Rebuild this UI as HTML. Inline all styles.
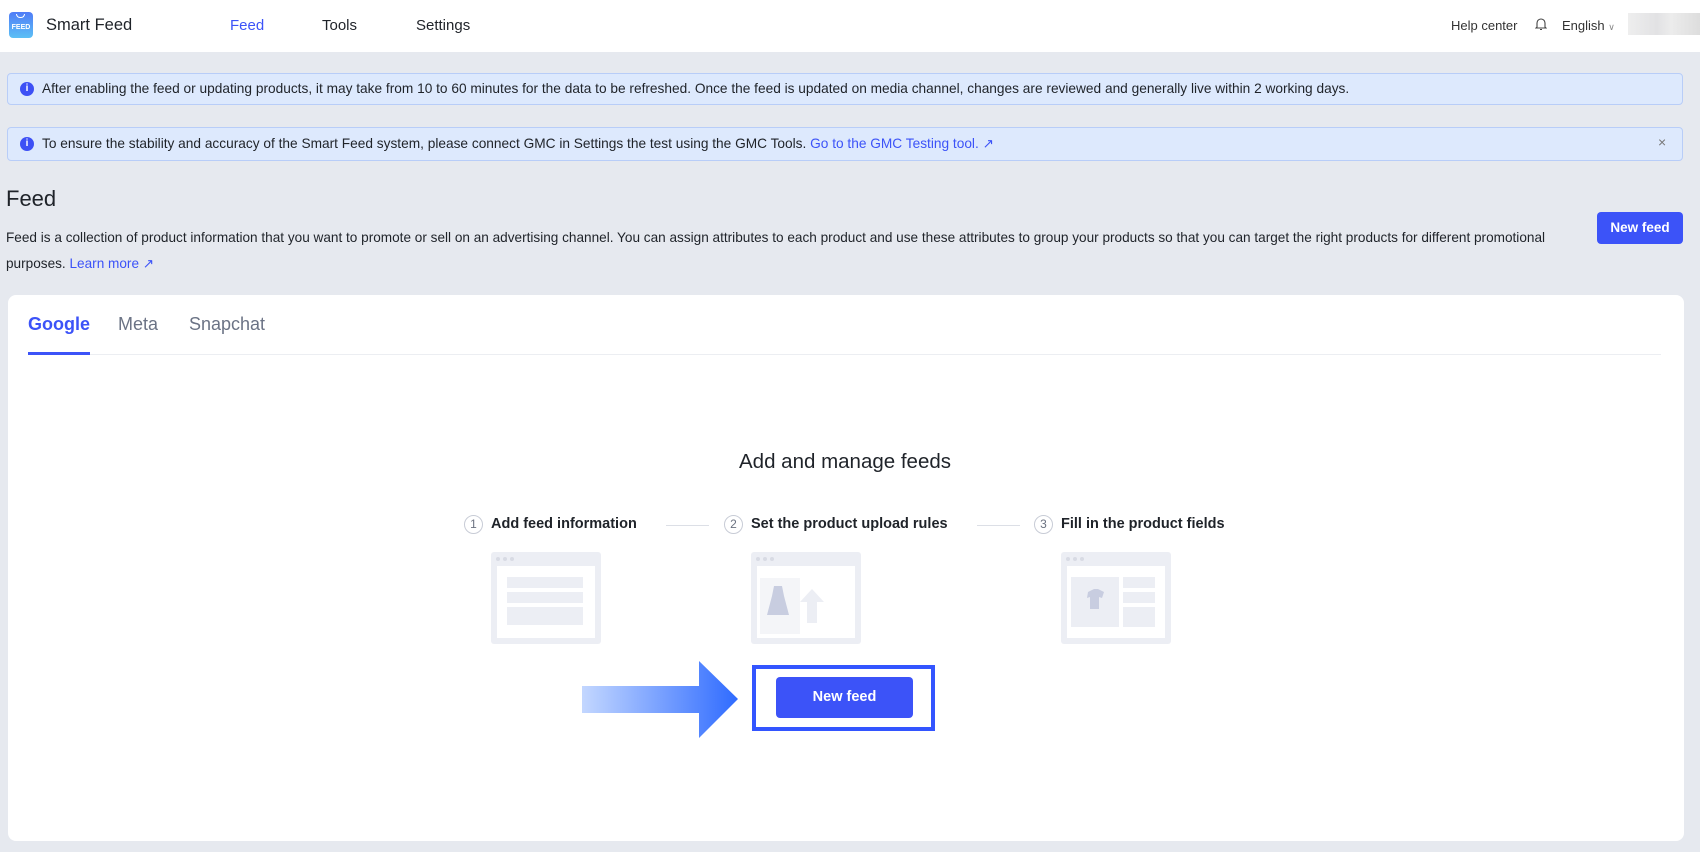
<!DOCTYPE html>
<html><head><meta charset="utf-8"><style>
*{box-sizing:border-box;margin:0;padding:0}
body{width:1700px;height:852px;background:#e6e9ef;font-family:"Liberation Sans",sans-serif;color:#1f2329;position:relative;overflow:hidden}
.abs{position:absolute;white-space:nowrap}
.hdr{position:absolute;left:0;top:0;width:1700px;height:52px;background:#fff}
.alert{position:absolute;left:7px;width:1676px;background:#dde9fd;border:1px solid #b8cdf8;border-radius:4px}
.info{position:absolute;width:14px;height:14px;border-radius:50%;background:#3d50f5;color:#fff;font-size:10px;font-weight:bold;text-align:center;line-height:14px}
.atext{font-size:13.7px;color:#1f2329;font-weight:500}
.btn{position:absolute;background:#3c53f8;color:#fff;font-weight:bold;font-size:14px;border-radius:4px;text-align:center}
.card{position:absolute;left:8px;top:295px;width:1676px;height:546px;background:#fff;border-radius:8px}
.circ{position:absolute;width:19px;height:19px;border:1px solid #c8ccd6;border-radius:50%;font-size:12px;color:#6b7280;text-align:center;line-height:17px}
.step{font-size:14.5px;font-weight:bold;color:#1f2329}
.ln{position:absolute;height:1px;background:#dcdfe6}
</style></head><body>
<div class="hdr"></div>
<div class="abs" style="left:9px;top:12px;width:24px;height:26px;border-radius:4px;background:linear-gradient(#4f7cf7,#5cc0f5)"></div>
<div class="abs" style="left:16px;top:14px;width:9px;height:4px;border:1.5px solid #fff;border-top:none;border-radius:0 0 5px 5px"></div>
<div class="abs" style="left:9px;top:24px;width:24px;font-size:7px;font-weight:bold;color:#fff;text-align:center">FEED</div>
<div class="abs" style="left:46px;top:16px;font-size:16.5px;color:#1f2329">Smart Feed</div>
<div class="abs" style="left:230px;top:17px;font-size:15px;color:#3c53f8;font-weight:500">Feed</div>
<div class="abs" style="left:322px;top:17px;font-size:15px;color:#1f2329">Tools</div>
<div class="abs" style="left:416px;top:17px;font-size:15px;color:#1f2329">Settings</div>
<div class="abs" style="left:1451px;top:18px;font-size:13px;color:#333">Help center</div>
<svg class="abs" style="left:1535px;top:17px" width="12" height="14" viewBox="0 0 12 14"><path d="M2 10V6a4 4 0 0 1 8 0v4l1 1H1z M5 12.5h2" fill="none" stroke="#444" stroke-width="1.1"/></svg>
<div class="abs" style="left:1562px;top:18px;font-size:13px;color:#333">English <span style="font-size:9px;color:#888">&#8744;</span></div>
<div class="abs" style="left:1628px;top:13px;width:72px;height:22px;background:linear-gradient(90deg,#eee,#e2e2e4 40%,#ececec 60%,#ddd)"></div>

<div class="alert" style="top:73px;height:32px"></div>
<div class="info" style="left:20px;top:82px">i</div>
<div class="abs atext" style="left:42px;top:81px">After enabling the feed or updating products, it may take from 10 to 60 minutes for the data to be refreshed. Once the feed is updated on media channel, changes are reviewed and generally live within 2 working days.</div>
<div class="alert" style="top:127px;height:34px"></div>
<div class="info" style="left:20px;top:137px">i</div>
<div class="abs atext" style="left:42px;top:136px">To ensure the stability and accuracy of the Smart Feed system, please connect GMC in Settings the test using the GMC Tools. <span style="color:#3c53f8">Go to the GMC Testing tool. &#8599;</span></div>
<div class="abs" style="left:1658px;top:134px;font-size:14px;color:#777">&times;</div>

<div class="abs" style="left:6px;top:186px;font-size:22px;color:#1f2329">Feed</div>
<div class="abs" style="left:6px;top:225px;font-size:13.6px;line-height:26px;color:#1f2329">Feed is a collection of product information that you want to promote or sell on an advertising channel. You can assign attributes to each product and use these attributes to group your products so that you can target the right products for different promotional<br>purposes. <span style="color:#3c53f8">Learn more &#8599;</span></div>
<div class="btn" style="left:1597px;top:212px;width:86px;height:32px;line-height:32px;font-size:13.5px">New feed</div>

<div class="card"></div>
<div class="abs" style="left:28px;top:314px;font-size:18px;font-weight:bold;color:#3c53f8">Google</div>
<div class="abs" style="left:118px;top:314px;font-size:18px;color:#6b7385">Meta</div>
<div class="abs" style="left:189px;top:314px;font-size:18px;color:#6b7385">Snapchat</div>
<div class="ln" style="left:28px;top:354px;width:1633px;background:#eceef2"></div>
<div class="abs" style="left:28px;top:352px;width:62px;height:3px;background:#3c53f8"></div>

<div class="abs" style="left:0;width:1690px;top:450px;text-align:center;font-size:20.5px;font-weight:500;color:#1f2329">Add and manage feeds</div>
<div class="circ" style="left:464px;top:515px">1</div>
<div class="abs step" style="left:491px;top:516px">Add feed information</div>
<div class="ln" style="left:666px;top:525px;width:43px"></div>
<div class="circ" style="left:724px;top:515px">2</div>
<div class="abs step" style="left:751px;top:516px">Set the product upload rules</div>
<div class="ln" style="left:977px;top:525px;width:43px"></div>
<div class="circ" style="left:1034px;top:515px">3</div>
<div class="abs step" style="left:1061px;top:516px">Fill in the product fields</div>

<svg class="abs" style="left:491px;top:552px" width="110" height="92"><rect width="110" height="92" rx="3" fill="#eceef4"/><circle cx="7" cy="7" r="2" fill="#d8dbe4"/><circle cx="14" cy="7" r="2" fill="#d8dbe4"/><circle cx="21" cy="7" r="2" fill="#d8dbe4"/><rect x="6" y="14" width="98" height="72" fill="#fff"/><rect x="16" y="25" width="76" height="11" fill="#eceef4"/><rect x="16" y="40" width="76" height="11" fill="#eceef4"/><rect x="16" y="55" width="76" height="18" fill="#eceef4"/></svg>
<svg class="abs" style="left:751px;top:552px" width="110" height="92"><rect width="110" height="92" rx="3" fill="#eceef4"/><circle cx="7" cy="7" r="2" fill="#d8dbe4"/><circle cx="14" cy="7" r="2" fill="#d8dbe4"/><circle cx="21" cy="7" r="2" fill="#d8dbe4"/><rect x="6" y="14" width="98" height="72" fill="#fff"/><rect x="9" y="26" width="40" height="56" fill="#f4f5f8"/><path d="M23 34h8l2 10 5 19H16l5-19z" fill="#c8cde0"/><path d="M61 37l12 13h-7v21h-10V50h-7z" fill="#eceef4"/></svg>
<svg class="abs" style="left:1061px;top:552px" width="110" height="92"><rect width="110" height="92" rx="3" fill="#eceef4"/><circle cx="7" cy="7" r="2" fill="#d8dbe4"/><circle cx="14" cy="7" r="2" fill="#d8dbe4"/><circle cx="21" cy="7" r="2" fill="#d8dbe4"/><rect x="6" y="14" width="98" height="72" fill="#fff"/><rect x="10" y="25" width="48" height="50" fill="#eceef4"/><path d="M27 40l6-3h4l6 3-2 6-3-1v12H29V45l-3 1z" fill="#c8cde0"/><rect x="62" y="25" width="32" height="11" fill="#eceef4"/><rect x="62" y="40" width="32" height="11" fill="#eceef4"/><rect x="62" y="55" width="32" height="20" fill="#eceef4"/></svg>

<svg class="abs" style="left:582px;top:661px" width="160" height="77"><defs><linearGradient id="g" x1="0" x2="1"><stop offset="0" stop-color="#c3d7ff"/><stop offset="1" stop-color="#2f6bff"/></linearGradient></defs><path d="M0 25H117V0L156 38 117 77V52H0z" fill="url(#g)"/></svg>
<div class="abs" style="left:752px;top:665px;width:183px;height:66px;border:4px solid #3355ff"></div>
<div class="btn" style="left:776px;top:677px;width:137px;height:41px;line-height:41px;font-size:14.5px">New feed</div>
</body></html>
